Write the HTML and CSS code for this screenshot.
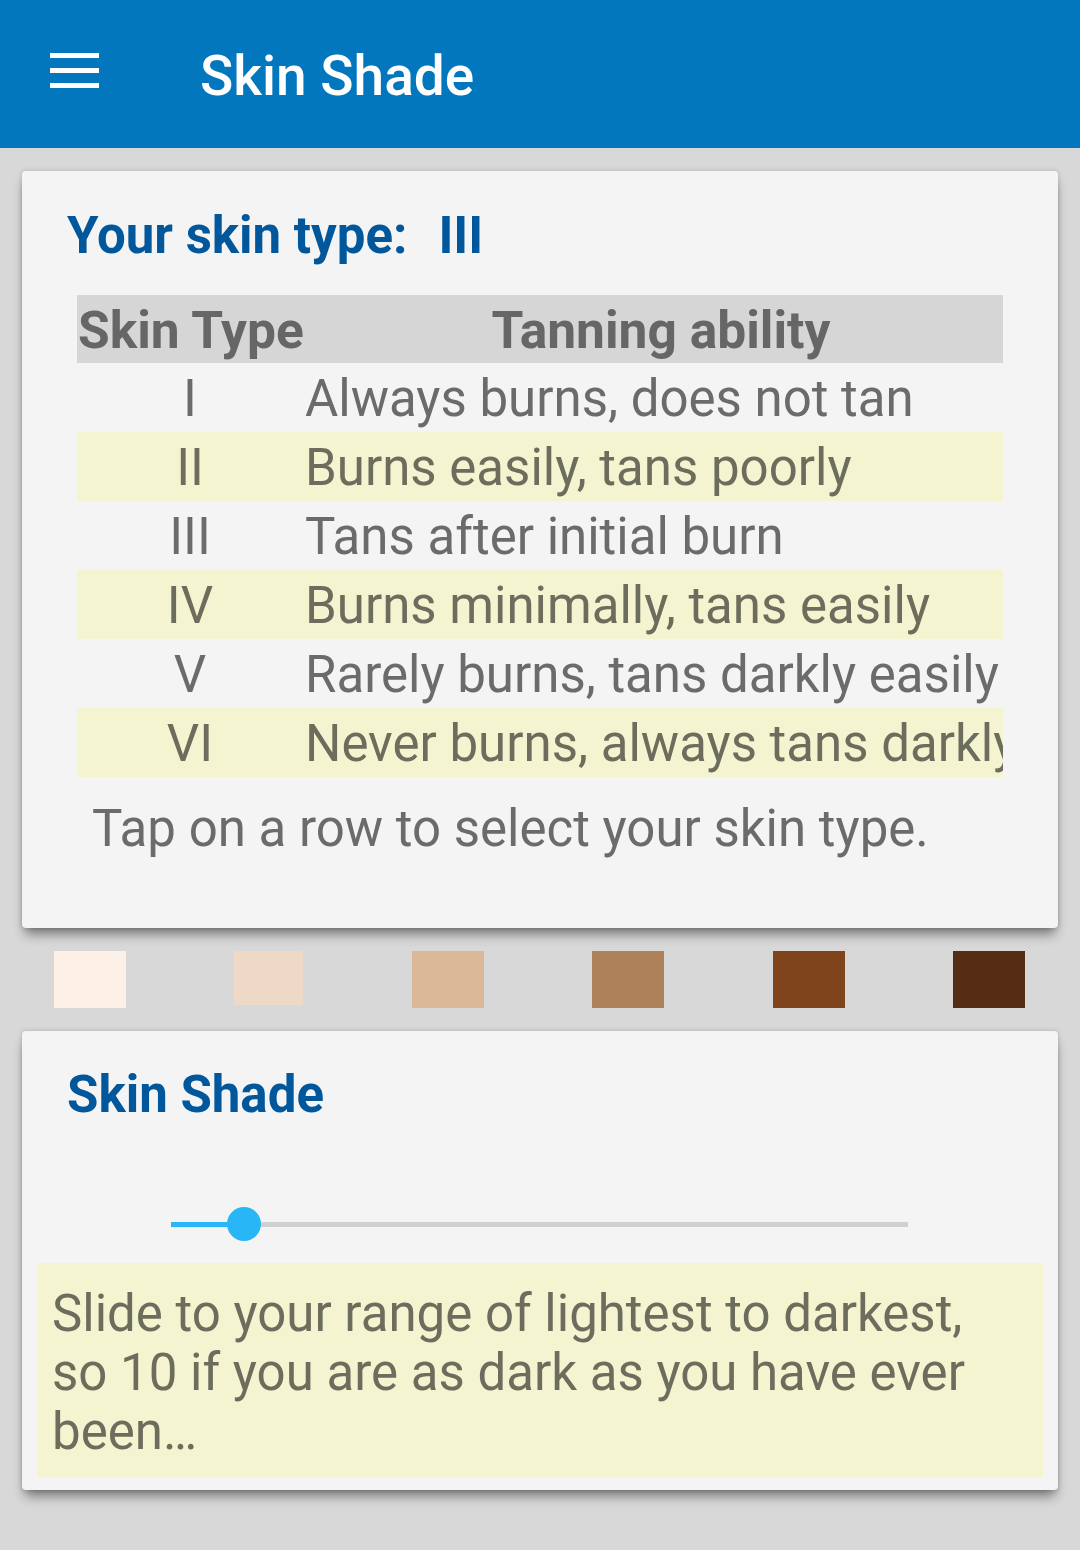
FILE: index.html
```html
<!DOCTYPE html>
<html>
<head>
<meta charset="utf-8">
<link rel="stylesheet" href="styles.css">
</head>
<body>
<header class="appbar">
  <div class="menu"><span></span><span></span><span></span></div>
  <div class="app-title">Skin Shade</div>
</header>
<main class="content">
  <section class="card card-type">
    <h1 class="card-title">Your skin type:<span class="type-val">III</span></h1>
    <div class="table">
      <div class="row head"><div class="c1">Skin Type</div><div class="c2 center">Tanning ability</div></div>
      <div class="row"><div class="c1">I</div><div class="c2">Always burns, does not tan</div></div>
      <div class="row alt"><div class="c1">II</div><div class="c2">Burns easily, tans poorly</div></div>
      <div class="row"><div class="c1">III</div><div class="c2">Tans after initial burn</div></div>
      <div class="row alt"><div class="c1">IV</div><div class="c2">Burns minimally, tans easily</div></div>
      <div class="row"><div class="c1">V</div><div class="c2">Rarely burns, tans darkly easily</div></div>
      <div class="row alt"><div class="c1">VI</div><div class="c2">Never burns, always tans darkly</div></div>
    </div>
    <p class="hint">Tap on a row to select your skin type.</p>
  </section>
  <div class="swatches">
    <div class="sw s1"></div>
    <div class="sw s2"></div>
    <div class="sw s3"></div>
    <div class="sw s4"></div>
    <div class="sw s5"></div>
    <div class="sw s6"></div>
  </div>
  <section class="card card-shade">
    <h2 class="card-title">Skin Shade</h2>
    <div class="slider">
      <div class="track"><div class="fill" style="width:73px"></div><div class="thumb" style="left:73px"></div></div>
    </div>
    <div class="note">Slide to your range of lightest to darkest, so 10 if you are as dark as you have ever been…</div>
  </section>
</main>
</body>
</html>
```

FILE: styles.css
```css
html, body {
  margin: 0;
  padding: 0;
}
body {
  width: 1080px;
  min-height: 1550px;
  background: #d8d8d8;
  font-family: Roboto, "Noto Sans", sans-serif;
  color: #6b6b6b;
}
.appbar {
  height: 148px;
  background: #0377bd;
  display: flex;
  align-items: center;
  box-sizing: border-box;
  padding-left: 50px;
}
.menu {
  width: 49px;
  display: flex;
  flex-direction: column;
  gap: 10px;
  margin-top: -8px;
}
.menu span {
  display: block;
  height: 5px;
  background: #ffffff;
}
.app-title {
  margin-left: 101px;
  color: #ffffff;
  font-size: 55px;
  font-weight: 500;
  margin-top: 4px;
}
.content {
  padding: 23px 22px 0;
}
.card {
  background: #f4f4f4;
  border-radius: 4px;
  box-shadow: 0 9px 12px -3px rgba(0,0,0,0.45), 0 0 5px rgba(0,0,0,0.18);
  position: relative;
}
.card-type {
  height: 757px;
  box-sizing: border-box;
  padding: 35px 55px 0;
}
.card-title {
  margin: 0;
  margin-left: -10px;
  font-size: 51px;
  line-height: 60px;
  font-weight: 700;
  color: #01579b;
}
.type-val {
  margin-left: 31px;
}
.table {
  margin-top: 29px;
  width: 926px;
  overflow: hidden;
}
.row {
  display: flex;
  height: 69px;
  line-height: 71px;
  font-size: 51px;
  white-space: nowrap;
}
.row.head {
  height: 68px;
  line-height: 72px;
  background: #d6d6d6;
  font-weight: 700;
  font-size: 51.5px;
  color: #666666;
}
.row.alt {
  background: #f4f5d0;
  color: #6d6d5d;
}
.c1 {
  width: 226px;
  flex: none;
  text-align: center;
}
.row.head .c1 {
  text-align: left;
  padding-left: 1px;
}
.c2 {
  flex: 1;
  padding-left: 2px;
  overflow: hidden;
}
.c2.center {
  text-align: center;
  padding-left: 15px;
}
.hint {
  margin: 22px 0 0 15px;
  font-size: 51px;
  line-height: 60px;
  color: #6b6b6b;
}
.swatches {
  position: relative;
  z-index: 1;
  margin: 23px -22px;
  height: 57px;
  display: flex;
  justify-content: space-between;
  padding: 0 55px 0 54px;
  background: #d8d8d8;
}
.sw {
  width: 72px;
  height: 57px;
}
.s1 { background: #fdf0e6; }
.s2 { background: #eed9c6; height: 54px; width: 69px; }
.s3 { background: #dab898; }
.s4 { background: #ae8159; }
.s5 { background: #80441c; }
.s6 { background: #552d15; }
.card-shade {
  height: 459px;
  box-sizing: border-box;
  padding: 34px 15px 0;
}
.card-shade .card-title {
  margin-left: 30px;
}
.slider {
  margin-top: 79px;
  height: 40px;
  position: relative;
  padding-left: 134px;
}
.track {
  position: relative;
  top: 18px;
  width: 737px;
  height: 5px;
  background: #d0d0d0;
}
.fill {
  height: 5px;
  background: #29b6f6;
}
.thumb {
  position: absolute;
  top: -15px;
  width: 34px;
  height: 34px;
  margin-left: -17px;
  border-radius: 50%;
  background: #29b6f6;
}
.note {
  margin-top: 19px;
  background: #f4f5d0;
  color: #6d6d5d;
  font-size: 51px;
  line-height: 59px;
  padding: 21px 40px 16px 15px;
}
```
